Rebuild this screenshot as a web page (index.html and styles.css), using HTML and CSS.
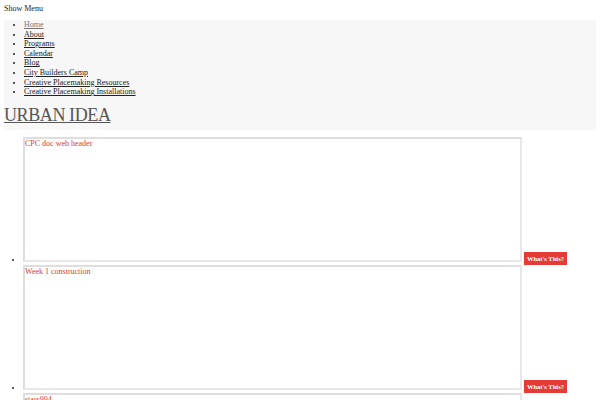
FILE: index.html
```html
<!DOCTYPE html>
<html>
<head>
<meta charset="utf-8">
<link rel="stylesheet" href="styles.css">
</head>
<body>
<div class="toggle">Show Menu</div>
<div class="header">
  <ul class="menu">
    <li><a class="current" href="#">Home</a></li>
    <li><a href="#">About</a></li>
    <li><a href="#">Programs</a></li>
    <li><a href="#">Calendar</a></li>
    <li><a href="#">Blog</a></li>
    <li><a href="#">City Builders Camp</a></li>
    <li><a href="#">Creative Placemaking Resources</a></li>
    <li><a href="#">Creative Placemaking Installations</a></li>
  </ul>
  <h1 class="logo"><a href="#">URBAN IDEA</a></h1>
</div>
<ul class="feed">
  <li><div class="frame">CPC doc web header</div><a class="what" href="#">What's This?</a></li>
  <li><div class="frame">Week 1 construction</div><a class="what" href="#">What's This?</a></li>
  <li><div class="frame">stars994</div><a class="what" href="#">What's This?</a></li>
</ul>
</body>
</html>
```

FILE: styles.css
```css
body {
  margin: 4px;
  font-family: "Liberation Serif", serif;
  font-size: 8px;
  color: #222;
}
.toggle {
  line-height: 10px;
  height: 10px;
}
.header {
  margin-top: 6px;
  background: #f7f7f7;
  padding: 0 0 1px;
}
.menu {
  margin: 0;
  padding: 0 0 0 20px;
  list-style: disc;
}
.menu li {
  line-height: 9.6px;
}
.menu a {
  color: #222;
}
.menu a.current {
  color: #777;
}
.logo {
  margin: 5px 0 0;
  font-size: 18px;
  letter-spacing: -0.4px;
  font-weight: normal;
  line-height: 27px;
}
.logo a {
  color: #555;
}
.feed {
  margin: 7px 0 0;
  padding: 0 0 0 19px;
  list-style: disc;
}
.feed li {
  line-height: 9px;
}
.frame {
  display: inline-block;
  overflow: hidden;
  vertical-align: baseline;
  box-sizing: border-box;
  width: 499px;
  height: 125px;
  border: 2px solid #e8e8e8;
  border-top-color: #dedede;
  border-left-color: #dedede;
  color: #d63a3a;
  line-height: 10px;
  padding: 0;
}
.what {
  display: inline-block;
  overflow: hidden;
  margin-left: 2px;
  background: #e53a35;
  color: #fff;
  font-size: 6.5px;
  font-weight: bold;
  line-height: 13px;
  height: 13px;
  padding: 0 3px;
  text-decoration: none;
  vertical-align: -3px;
}
```
